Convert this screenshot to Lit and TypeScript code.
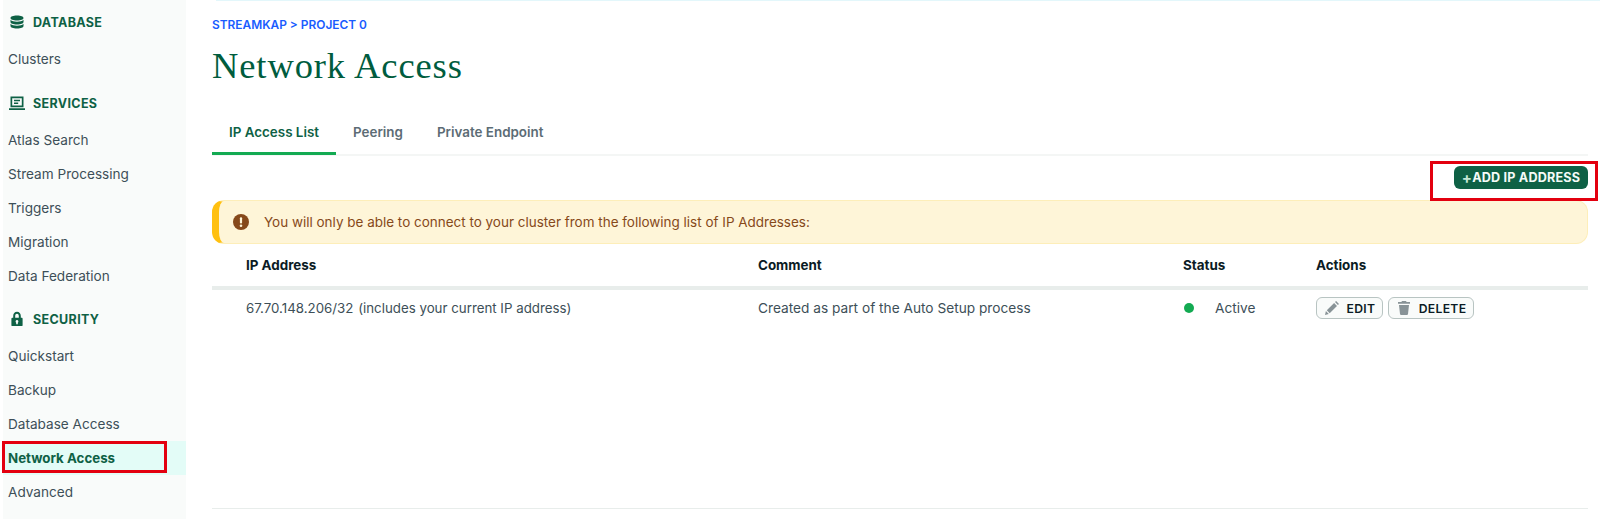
import { LitElement, html, css, svg } from "lit";
import { customElement } from "lit/decorators.js";

const dbIcon = svg`<path fill="currentColor" d="M8 1.500C4 1.500 1.500 2.600 1.500 4S4 6.500 8 6.500 14.500 5.400 14.500 4 12 1.500 8 1.500ZM1.500 5.800V8c0 1.400 2.500 2.500 6.500 2.500S14.500 9.400 14.500 8V5.800C13.200 7.200 10.700 7.700 8 7.700S2.800 7.200 1.500 5.800ZM1.500 9.800V12c0 1.400 2.500 2.500 6.500 2.500s6.500-1.100 6.500-2.500V9.800c-1.300 1.400-3.800 1.900-6.500 1.900S2.800 11.200 1.500 9.800Z"/>`;
const svcIcon = svg`<path fill="currentColor" fill-rule="evenodd" d="M1.500 1.500h13v10.800h-13V1.500ZM3.200 3.200v7.400h9.600V3.200H3.200ZM5 4.800h6v1.500H5V4.800Zm0 2.700h4.200V9H5V7.500ZM0 13.200h16V15H0v-1.800Z"/>`;
const lockIcon = svg`<path fill="currentColor" fill-rule="evenodd" d="M8 .800C5.700.800 4.200 2.600 4.200 5v1.800H3.400C2.800 6.800 2.400 7.200 2.400 7.700v6.500c0 .5.400.9 1 .9h9.200c.6 0 1-.4 1-.9V7.700c0-.5-.4-.9-1-.9h-.8V5C11.800 2.600 10.300.800 8 .800Zm0 2c1 0 1.800.9 1.800 2.200v1.800H6.200V5c0-1.300.8-2.200 1.800-2.200ZM8 9a1.500 1.500 0 0 1 .8 2.700V13.300H7.200v-1.600A1.500 1.500 0 0 1 8 9Z"/>`;
const pencil = svg`<path fill="currentColor" d="M1 15l.9-3.900 2.900 2.900L1 15Zm1.800-4.700L10.100 3 13 5.900l-7.300 7.300-2.900-2.900ZM11 2.100l1.100-1.100 2.900 2.900-1.100 1.100L11 2.100Z"/>`;
const trash = svg`<path fill="currentColor" d="M6 1h4l.6 1H14v1.800H2V2h3.400L6 1ZM3 5h10l-1 9c-.1.600-.5 1-1.100 1H5.100C4.500 15 4.100 14.600 4 14L3 5Z"/>`;

@customElement("app-root")
export class AppRoot extends LitElement {
  static styles = css`
    :host {
      display: block;
      position: relative;
      height: 519px;
      overflow: hidden;
      background: #fff;
      font-family: "Inter", "Liberation Sans", sans-serif;
      color: #1c2d38;
    }
    .shell { display: flex; height: 519px; padding-left: 3px; box-sizing: border-box; }
    .side { width: 183px; flex: none; background: #f9fbfa; padding-top: 11px; box-sizing: border-box; }
    .group {
      display: flex; align-items: center; gap: 8px; height: 22px; padding-left: 6px;
      font-size: 12.500px; font-weight: 700; letter-spacing: 0.35px; color: #0e6145;
      margin-bottom: 9px;
    }
    .group svg { width: 16px; height: 16px; flex: none; }
    .group.next { margin-top: 16px; }
    .group.sec { margin-top: 15px; }
    .item { height: 34px; line-height: 34px; padding-left: 5px; font-size: 13.600px; color: #3d4f58; white-space: nowrap; }
    .item.on { background: #e3fcf7; color: #0e6145; font-weight: 700; font-size: 13.300px; }

    .main { flex: 1; min-width: 0; padding: 0 12px 0 26px; display: flex; flex-direction: column; }
    .topline { height: 1px; background: #e3f7fb; margin-left: 4px; margin-right: -12px; }
    .crumb { margin-top: 16px; font-size: 11.900px; line-height: 16px; font-weight: 600; color: #1a5cff; white-space: nowrap; }
    h1 {
      margin: 11px 0 0; font-family: "Liberation Serif", serif; font-weight: 400; font-size: 36.500px;
      line-height: 44px; color: #005c3e; letter-spacing: 0.9px;
    }
    .tabs { display: flex; margin-top: 15px; height: 53px; box-sizing: border-box; border-bottom: 2px solid #f4f6f5; }
    .tab {
      height: 52px; flex: none; box-sizing: border-box; padding: 13px 17px 0; line-height: 32px; font-size: 13.400px; font-weight: 600;
      color: #5c6c75; white-space: nowrap;
    }
    .tab.on { color: #0e6145; border-bottom: 3px solid #13aa52; border-radius: 2px 2px 0 0; }
    .toolbar { display: flex; justify-content: flex-end; margin-top: 10px; }
    .add {
      height: 23px; width: 134px; box-sizing: border-box; border-radius: 6px; background: #0e6145; color: #f5fbf8;
      display: flex; align-items: center; justify-content: center;
      font-size: 12.600px; font-weight: 700; letter-spacing: 0.2px; white-space: nowrap;
    }
    .add b { font-size: 15px; font-weight: 700; color: #c3e7d5; }
    .banner {
      margin-top: 11px; height: 44px; box-sizing: border-box; background: #fef5d8; border: 1px solid #fdeeb9;
      border-left: 7px solid #ffc010; border-radius: 12px; display: flex; align-items: center;
      padding-left: 14px; font-size: 13.480px; color: #86491a; white-space: nowrap;
    }
    .banner svg { width: 16px; height: 16px; flex: none; margin-right: 15px; }
    .row {
      display: grid; grid-template-columns: 512px 425px 133px 1fr; padding-left: 34px; align-items: center;
    }
    .head { height: 42px; border-bottom: 4px solid #e8edeb; font-size: 13.400px; font-weight: 700; color: #0b1b24; }
    .body { height: 36px; font-size: 13.700px; color: #3d4f58; white-space: nowrap; }
    .ip { font-size: 13.300px; }
    .ip span { margin-right: 1px; }
    .status { display: flex; align-items: center; gap: 21px; padding-left: 1px; }
    .dot { width: 10px; height: 10px; border-radius: 50%; background: #13aa52; flex: none; }
    .actions { display: flex; gap: 5px; }
    .btn {
      height: 22px; box-sizing: border-box; border: 1px solid #b8c4c2; border-radius: 6px; background: #f9fbfa;
      display: flex; align-items: center; justify-content: center; gap: 7px;
      font-size: 12.200px; font-weight: 600; color: #0b1b24; letter-spacing: 0.3px;
    }
    .btn svg { width: 16px; height: 16px; color: #889397; flex: none; }
    .edit { width: 67px; }
    .delete { width: 86px; }
    .spacer { flex: 1; }
    .bottom { height: 1px; background: #e8edeb; margin-bottom: 10px; }
    .mark { position: absolute; border: 3px solid #e3000f; box-sizing: border-box; pointer-events: none; }
    .m1 { left: 2px; top: 441px; width: 165px; height: 32px; }
    .m2 { left: 1430px; top: 161px; width: 168px; height: 40px; }
  `;

  private item(t: string, on = false) {
    return html`<div class="item ${on ? "on" : ""}">${t}</div>`;
  }

  render() {
    return html`
      <div class="shell">
        <nav class="side">
          <div class="group"><svg viewBox="0 0 16 16">${dbIcon}</svg>DATABASE</div>
          ${this.item("Clusters")}
          <div class="group next"><svg viewBox="0 0 16 16">${svcIcon}</svg>SERVICES</div>
          ${["Atlas Search", "Stream Processing", "Triggers", "Migration", "Data Federation"].map((t) => this.item(t))}
          <div class="group sec"><svg viewBox="0 0 16 16">${lockIcon}</svg>SECURITY</div>
          ${["Quickstart", "Backup", "Database Access"].map((t) => this.item(t))}
          ${this.item("Network Access", true)}
          ${this.item("Advanced")}
        </nav>
        <main class="main">
          <div class="topline"></div>
          <div class="crumb">STREAMKAP &gt; PROJECT 0</div>
          <h1>Network Access</h1>
          <div class="tabs">
            <div class="tab on">IP Access List</div>
            <div class="tab">Peering</div>
            <div class="tab">Private Endpoint</div>
          </div>
          <div class="toolbar"><div class="add"><b>+</b>ADD IP ADDRESS</div></div>
          <div class="banner">
            <svg viewBox="0 0 16 16"><circle cx="8" cy="8" r="8" fill="#86491a"/><rect x="6.900" y="3.200" width="2.200" height="6.300" rx="1" fill="#fef5d8"/><circle cx="8" cy="11.700" r="1.300" fill="#fef5d8"/></svg>
            You will only be able to connect to your cluster from the following list of IP Addresses:
          </div>
          <div class="row head"><div>IP Address</div><div>Comment</div><div>Status</div><div>Actions</div></div>
          <div class="row body">
            <div class="ip"><span>67.70.148.206/32</span> (includes your current IP address)</div>
            <div>Created as part of the Auto Setup process</div>
            <div class="status"><span class="dot"></span>Active</div>
            <div class="actions">
              <div class="btn edit"><svg viewBox="0 0 16 16">${pencil}</svg>EDIT</div>
              <div class="btn delete"><svg viewBox="0 0 16 16">${trash}</svg>DELETE</div>
            </div>
          </div>
          <div class="spacer"></div>
          <div class="bottom"></div>
        </main>
      </div>
      <div class="mark m1"></div>
      <div class="mark m2"></div>
    `;
  }
}
